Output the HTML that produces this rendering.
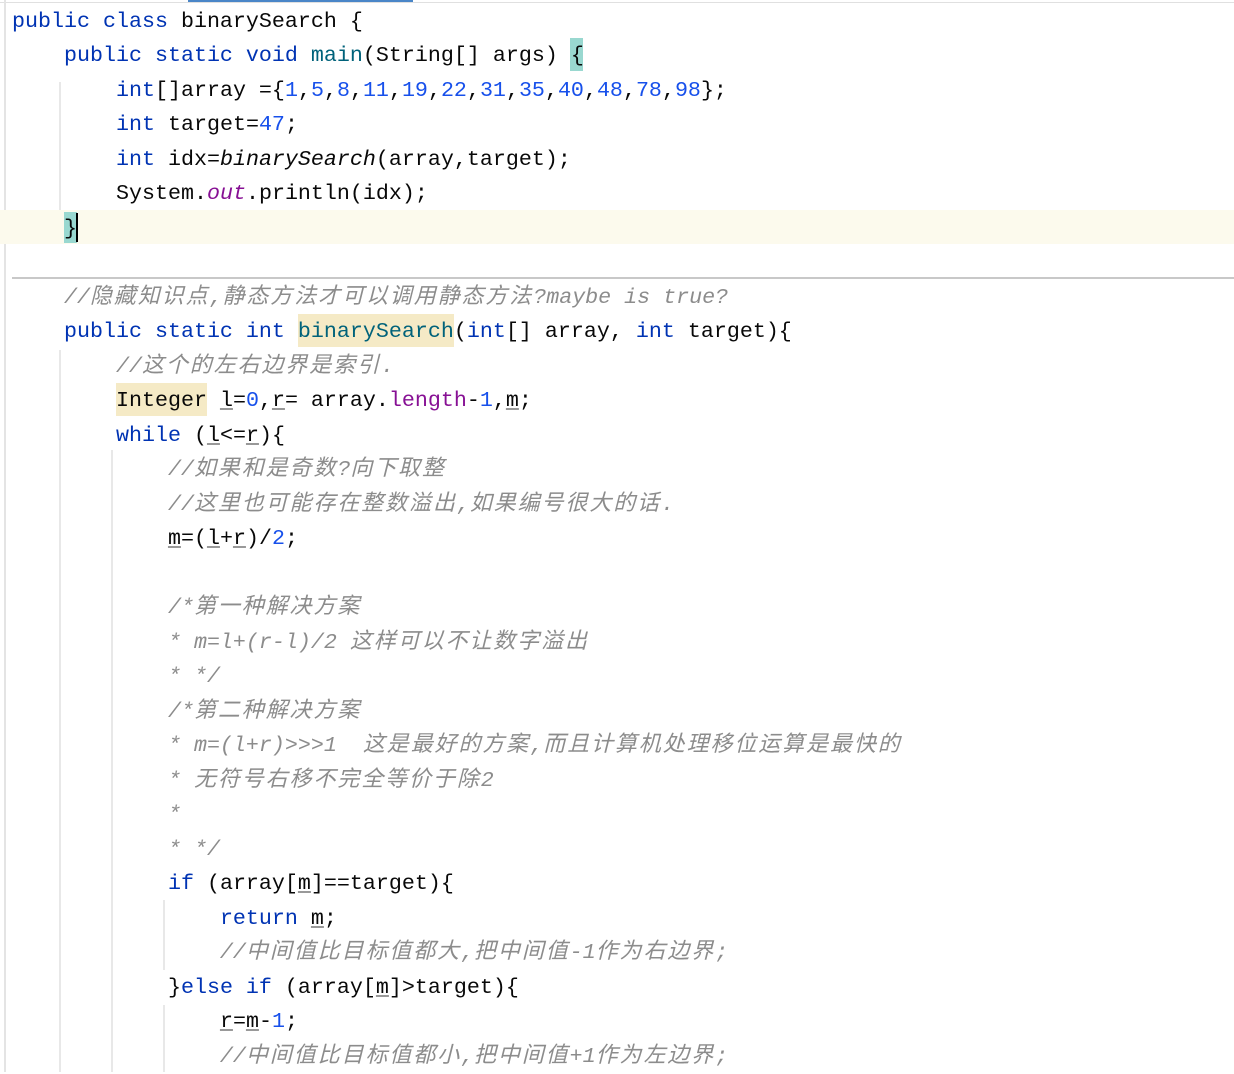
<!DOCTYPE html>
<html><head><meta charset="utf-8">
<style>
body{margin:0;width:1234px;height:1072px;background:#fff;position:relative;overflow:hidden;font-family:"Liberation Mono","Noto Sans CJK SC",monospace;font-size:21.67px;color:#080808}
.l{position:absolute;left:12px;height:34.5px;line-height:34.5px;white-space:pre}
.k{color:#0033b3}.n{color:#1750eb}.f{color:#00627a}.p{color:#871094}
.c{color:#8c8c8c;font-style:italic}
.c b{font-weight:normal;letter-spacing:1.9px;font-size:22px}
.i{font-style:italic}
.u{text-decoration:underline;text-decoration-color:#999}
.g{position:absolute;width:2px;background:#e8e8e8}
</style></head><body>
<div style="position:absolute;left:188px;top:0;width:225px;height:3px;background:#4a86c8"></div>
<div style="position:absolute;left:0;top:2px;width:1234px;height:1px;background:#e0e0e0"></div>
<div style="position:absolute;left:4px;top:0;width:2px;height:1072px;background:#e4e4e4"></div>
<div style="position:absolute;left:0;top:210px;width:1234px;height:34px;background:#fcfaed"></div>
<div style="position:absolute;left:12px;top:277px;width:1222px;height:2px;background:#c8c8c8"></div>
<div class="g" style="left:59px;top:82px;height:128px"></div>
<div class="g" style="left:59px;top:350px;height:722px"></div>
<div class="g" style="left:111px;top:450px;height:622px"></div>
<div class="g" style="left:163px;top:900px;height:70px"></div>
<div class="g" style="left:163px;top:1005px;height:67px"></div>
<div style="position:absolute;left:570px;top:38px;width:13px;height:33px;background:#99d8d0"></div>
<div style="position:absolute;left:64px;top:212px;width:13px;height:31px;background:#99d8d0"></div>
<div style="position:absolute;left:76px;top:213px;width:2px;height:29px;background:#000"></div>
<div style="position:absolute;left:298px;top:314px;width:156px;height:33px;background:#f5eac6"></div>
<div style="position:absolute;left:116px;top:383px;width:91px;height:33px;background:#f5eac6"></div>

<div class="l" style="top:4.5px"><span class="k">public class</span> binarySearch {</div>
<div class="l" style="top:39px">    <span class="k">public static void</span> <span class="f">main</span>(String[] args) {</div>
<div class="l" style="top:73.5px">        <span class="k">int</span>[]array ={<span class="n">1</span>,<span class="n">5</span>,<span class="n">8</span>,<span class="n">11</span>,<span class="n">19</span>,<span class="n">22</span>,<span class="n">31</span>,<span class="n">35</span>,<span class="n">40</span>,<span class="n">48</span>,<span class="n">78</span>,<span class="n">98</span>};</div>
<div class="l" style="top:108px">        <span class="k">int</span> target=<span class="n">47</span>;</div>
<div class="l" style="top:142.5px">        <span class="k">int</span> idx=<span class="i">binarySearch</span>(array,target);</div>
<div class="l" style="top:177px">        System.<span class="p i">out</span>.println(idx);</div>
<div class="l" style="top:211.5px">    }</div>
<div class="l c" style="top:280.5px">    //<b>隐藏知识点</b>,<b>静态方法才可以调用静态方法</b>?maybe is true?</div>
<div class="l" style="top:315px">    <span class="k">public static int</span> <span class="f">binarySearch</span>(<span class="k">int</span>[] array, <span class="k">int</span> target){</div>
<div class="l c" style="top:349.5px">        //<b>这个的左右边界是索引</b>.</div>
<div class="l" style="top:384px">        Integer <span class="u">l</span>=<span class="n">0</span>,<span class="u">r</span>= array.<span class="p">length</span>-<span class="n">1</span>,<span class="u">m</span>;</div>
<div class="l" style="top:418.5px">        <span class="k">while</span> (<span class="u">l</span>&lt;=<span class="u">r</span>){</div>
<div class="l c" style="top:453px">            //<b>如果和是奇数</b>?<b>向下取整</b></div>
<div class="l c" style="top:487.5px">            //<b>这里也可能存在整数溢出</b>,<b>如果编号很大的话</b>.</div>
<div class="l" style="top:522px">            <span class="u">m</span>=(<span class="u">l</span>+<span class="u">r</span>)/<span class="n">2</span>;</div>
<div class="l c" style="top:591px">            /*<b>第一种解决方案</b></div>
<div class="l c" style="top:625.5px">            * m=l+(r-l)/2 <b>这样可以不让数字溢出</b></div>
<div class="l c" style="top:660px">            * */</div>
<div class="l c" style="top:694.5px">            /*<b>第二种解决方案</b></div>
<div class="l c" style="top:729px">            * m=(l+r)&gt;&gt;&gt;1  <b>这是最好的方案</b>,<b>而且计算机处理移位运算是最快的</b></div>
<div class="l c" style="top:763.5px">            * <b>无符号右移不完全等价于除</b>2</div>
<div class="l c" style="top:798px">            *</div>
<div class="l c" style="top:832.5px">            * */</div>
<div class="l" style="top:867px">            <span class="k">if</span> (array[<span class="u">m</span>]==target){</div>
<div class="l" style="top:901.5px">                <span class="k">return</span> <span class="u">m</span>;</div>
<div class="l c" style="top:936px">                //<b>中间值比目标值都大</b>,<b>把中间值</b>-1<b>作为右边界</b>;</div>
<div class="l" style="top:970.5px">            }<span class="k">else if</span> (array[<span class="u">m</span>]&gt;target){</div>
<div class="l" style="top:1005px">                <span class="u">r</span>=<span class="u">m</span>-<span class="n">1</span>;</div>
<div class="l c" style="top:1039.5px">                //<b>中间值比目标值都小</b>,<b>把中间值</b>+1<b>作为左边界</b>;</div>
</body></html>
